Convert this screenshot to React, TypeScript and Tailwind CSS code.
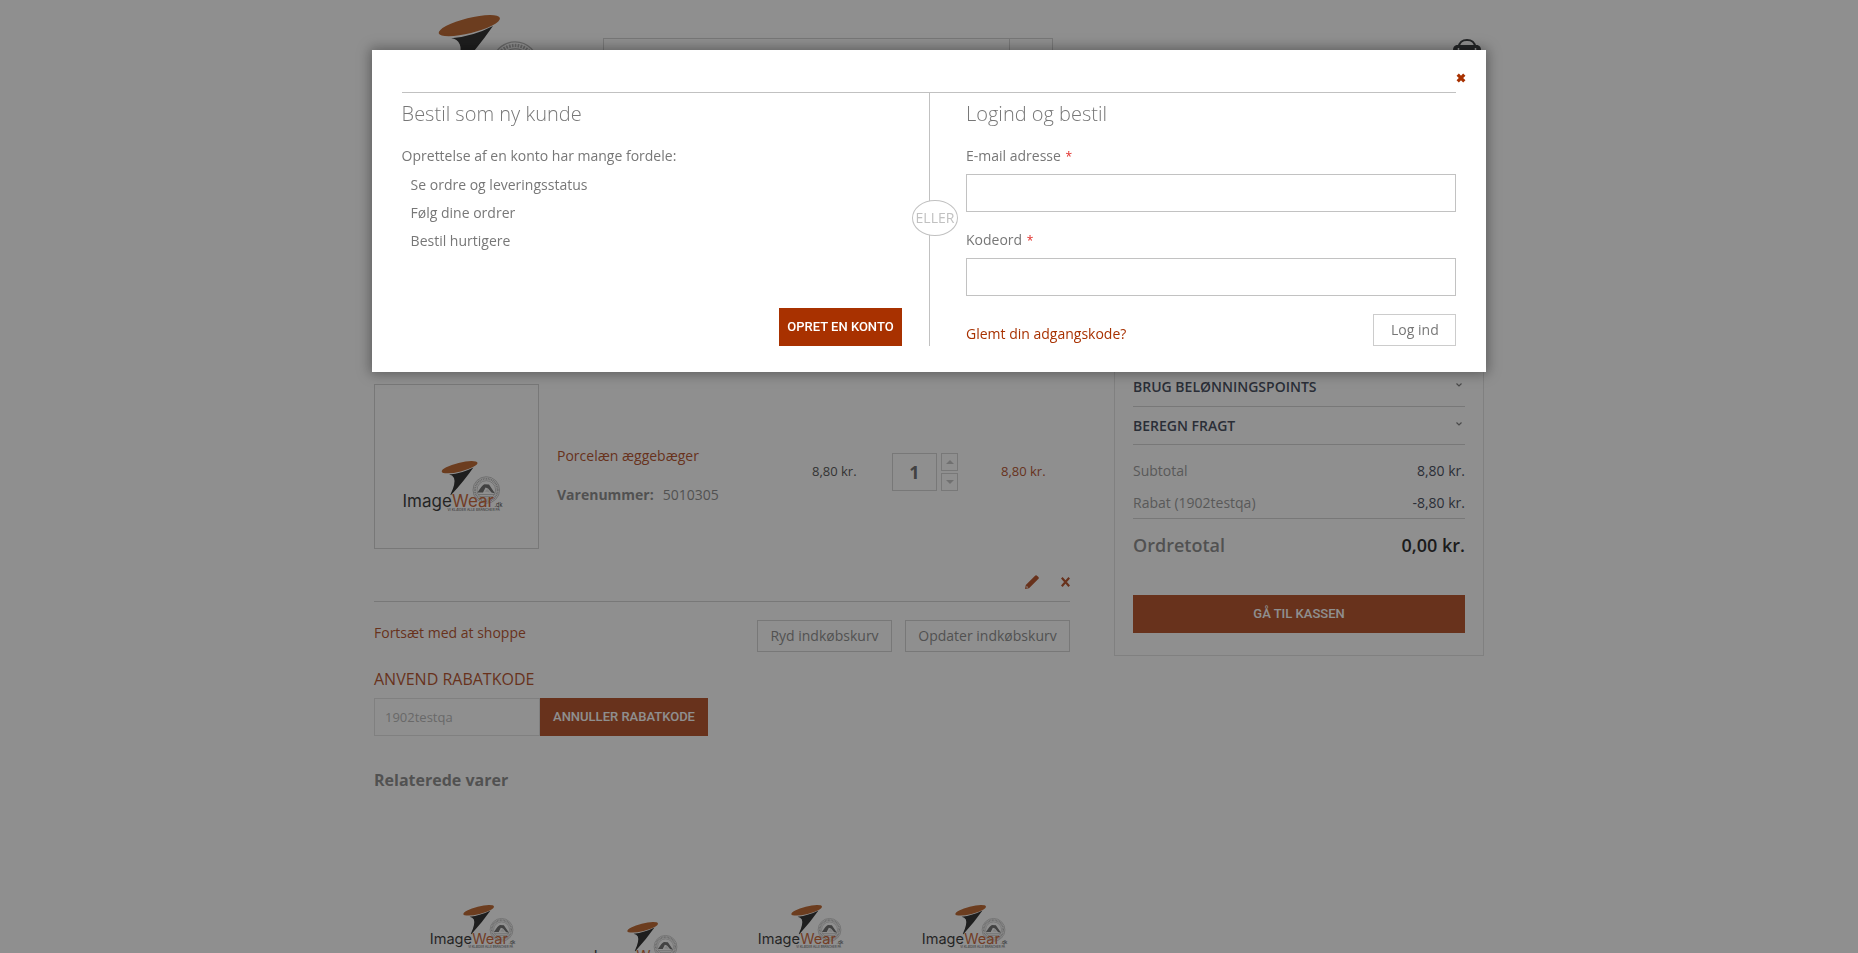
import React from "react";

const caption = "font-['Roboto','Open_Sans',sans-serif] text-[13px] font-medium text-white whitespace-nowrap";
const outline = "h-8 border border-[#ccc] text-sm text-[#777]";

function Logo({ className }: { className: string }) {
  return (
    <svg viewBox="0 0 98 52" className={`overflow-visible ${className}`} role="img" aria-label="ImageWear.dk">
      <g fill="none" stroke="#a8a8a8">
        <circle cx="82.3" cy="29" r="13.3" strokeWidth="0.8" />
        <circle cx="82.3" cy="29" r="11.3" strokeWidth="2" strokeDasharray="1 0.7" />
        <circle cx="82.3" cy="29" r="9.3" strokeWidth="0.7" />
      </g>
      <path d="M73.5 31.5Q78 24 80.5 23.2L85 23.6 91 32.5 87.5 31.5 84 27.5 81.500 26.500 79 31.5Z" fill="#555" />
      <path d="M80.500 30.500 83.500 28 86 31.500Z" fill="#ddd" />
      <path d="M74 33.5h16.5M76 35.7h12.5" stroke="#a8a8a8" strokeWidth="0.8" />
      <path d="M45 13.6Q58 12.4 69.4 6.4Q60 20 47 34L46.4 33.8Q52 22 50 17Q48.6 14 45 13.6Z" fill="#050505" />
      <ellipse cx="55.6" cy="6.2" rx="18.4" ry="4.4" transform="rotate(-14 55.6 6.2)" fill="#b24a08" />
      <g className="font-['Inter','Open_Sans',sans-serif]">
        <text x="-1.5" y="45.5" fontSize="17" fill="#111">Image</text>
        <text x="48" y="45.5" fontSize="17" fill="#c04a10">Wear</text>
        <text x="90.5" y="45.5" fontSize="5.5" fill="#222">.dk</text>
        <text x="43.5" y="50.4" fontSize="3.4" fill="#222">VI KLÆDER ALLE BRANCHER PÅ</text>
      </g>
    </svg>
  );
}

function CloseMark({ className }: { className: string }) {
  return (
    <svg viewBox="0 0 10 10" className={className} aria-hidden="true">
      <path d="M1.7 1.7l6.6 6.6M8.3 1.7l-6.6 6.6" stroke="currentColor" strokeWidth="3.2" />
    </svg>
  );
}

function Header() {
  return (
    <header className="mx-auto flex h-[120px] w-full max-w-[1110px] items-start">
      <Logo className="mt-[15px] w-[168px]" />
      <div className="mt-[38px] ml-[61px] flex h-10 w-[450px] border border-[#ccc]">
        <input aria-label="Søg" className="min-w-0 flex-1 border-r border-[#ccc] outline-none" />
        <button aria-label="Søg nu" className="w-[42px]" />
      </div>
      <button aria-label="Indkøbskurv" className="mt-[38px] mr-[3px] ml-auto text-[#111518]">
        <svg viewBox="0 0 28 30" className="w-7" fill="currentColor" aria-hidden="true">
          <path d="M6 9C6 4.5 9.5 2 14 2s8 2.5 8 7" fill="none" stroke="currentColor" strokeWidth="2.2" />
          <path d="M3.5 7h21q3.5 1 3.5 5l-3 17H3L0 12Q0 8 3.5 7Z" />
          <path d="M5.500 10v3M22.500 10v3" stroke="#fff" strokeWidth="1.5" />
        </svg>
      </button>
    </header>
  );
}

function Stepper({ up }: { up: boolean }) {
  return (
    <button aria-label={up ? "Flere" : "Færre"} className="flex h-[18px] w-[17px] items-center justify-center border border-[#ccc] text-[#bbb]">
      <svg viewBox="0 0 8 4" className="w-2" fill="currentColor" aria-hidden="true">
        <path d={up ? "M0 4 4 0 8 4Z" : "M0 0 4 4 8 0Z"} />
      </svg>
    </button>
  );
}

function CartItem() {
  return (
    <div className="border-b border-[#ccc] pb-3">
      <div className="flex h-[165px] items-center">
        <div className="flex h-[165px] w-[165px] shrink-0 justify-center border border-[#ccc] pt-[76px] pr-2">
          <Logo className="h-[52px] w-[98px]" />
        </div>
        <div className="mt-[18px] ml-[18px] w-[255px]">
          <a href="#vare" className="block leading-5 text-[#a83100]">Porcelæn æggebæger</a>
          <p className="mt-[19px] leading-5">
            <strong className="mr-[9px] font-bold">Varenummer:</strong>5010305
          </p>
        </div>
        <span className="mt-[10px] w-[80px] text-[13px] text-[#333]">8,80 kr.</span>
        <input aria-label="Antal" defaultValue="1" className="mt-[10px] h-[38px] w-[45px] border border-[#ccc] text-center text-[18px] font-bold text-[#555]" />
        <div className="mt-[10px] ml-1 flex flex-col gap-[2px]">
          <Stepper up />
          <Stepper up={false} />
        </div>
        <span className="mt-[10px] ml-[43px] text-[13px] text-[#a83100]">8,80 kr.</span>
      </div>
      <div className="mt-[26px] flex items-center justify-end gap-[22px] text-[#a83100]">
        <button aria-label="Rediger">
          <svg viewBox="0 0 14 14" className="h-[14px] w-[14px]" fill="currentColor" aria-hidden="true">
            <path d="M0 14 .8 10 9.8 1Q11-.3 12.3.9L13.2 1.8Q14.5 3 13 4.3L4 13.2Z" />
            <path d="M1.6 10.8 3.3 12.5 1.4 12.8Z" fill="#fff" />
          </svg>
        </button>
        <button aria-label="Fjern">
          <svg viewBox="0 0 9 10" className="h-[10px] w-[9px]" aria-hidden="true">
            <path d="M.8.8 8.2 9.2M8.2.8.8 9.2" stroke="currentColor" strokeWidth="2.2" />
          </svg>
        </button>
      </div>
    </div>
  );
}

function Summary() {
  const row = "flex items-center justify-between";
  return (
    <aside className="mt-[-70px] w-[370px] shrink-0 self-start border border-[#ddd] px-[18px] pt-[53px] pb-[22px]">
      {["BRUG BELØNNINGSPOINTS", "BEREGN FRAGT"].map((label) => (
        <button key={label} className={`${row} h-[38px] w-full border-b border-[#ccc] pt-px text-left font-semibold text-[#21293c] first:h-[39px] first:pb-px`}>
          {label}
          <svg viewBox="0 0 6 4" className="mr-[3px] mb-1 w-[6px]" aria-hidden="true">
            <path d="M.5.5 3 3 5.5.5" fill="none" stroke="#666" strokeWidth="1.200" />
          </svg>
        </button>
      ))}
      <div className={`${row} mt-[10px] h-8`}>
        <span className="text-[#888]">Subtotal</span>
        <span className="text-[#21293c]">8,80 kr.</span>
      </div>
      <div className={`${row} h-8 border-b border-[#ccc]`}>
        <span className="text-[#888]">Rabat (1902testqa)</span>
        <span className="text-[#21293c]">-8,80 kr.</span>
      </div>
      <div className={`${row} mt-[9px] h-9 text-[18px] font-semibold`}>
        <span className="text-[#777]">Ordretotal</span>
        <span className="text-black">0,00 kr.</span>
      </div>
      <button className={`mt-[31px] h-[38px] w-full bg-[#a83100] ${caption}`}>GÅ TIL KASSEN</button>
    </aside>
  );
}

function Field({ id, type, label }: { id: string; type: string; label: string }) {
  return (
    <div className="mt-[18px]">
      <label htmlFor={id} className="block leading-5">
        {label} <span className="ml-px text-xs text-[#e02b27]">*</span>
      </label>
      <input id={id} type={type} className="mt-2 block h-[38px] w-full border border-[#c2c2c2] px-2" />
    </div>
  );
}

function LoginModal() {
  return (
    <div className="fixed inset-0 flex items-start justify-center bg-[#333]/55 pt-[50px]">
      <div role="dialog" aria-label="Bestil" className="w-3/5 bg-white px-[30px] pb-[26px] shadow-[0_0_12px_2px_rgba(0,0,0,0.35)]">
        <div className="mr-[-10px] flex h-[42px] items-end justify-end pb-[9px]">
          <button aria-label="Luk" className="text-[#a83100]">
            <CloseMark className="h-[10px] w-[10px]" />
          </button>
        </div>
        <div className="flex border-t border-[#c1c1c1]">
          <section className="flex w-1/2 flex-col pt-[7px]">
            <h2 className="text-xl leading-7 font-light">Bestil som ny kunde</h2>
            <p className="mt-[18px] leading-5">Oprettelse af en konto har mange fordele:</p>
            <ul className="mt-[5px] pl-[9px] leading-7">
              <li>Se ordre og leveringsstatus</li>
              <li>Følg dine ordrer</li>
              <li>Bestil hurtigere</li>
            </ul>
            <button className={`mt-auto mr-[27px] h-[38px] w-[123px] self-end bg-[#a83100] ${caption}`}>OPRET EN KONTO</button>
          </section>
          <section className="relative w-1/2 border-l border-[#c1c1c1] pt-[7px] pl-9">
            <span className="absolute top-[107px] left-[-18px] flex h-9 w-[46px] items-center justify-center rounded-[50%] border border-[#c1c1c1] bg-white text-[#c1c1c1]">ELLER</span>
            <h2 className="text-xl leading-7 font-light">Logind og bestil</h2>
            <Field id="email" type="email" label="E-mail adresse" />
            <Field id="password" type="password" label="Kodeord" />
            <div className="mt-[18px] flex h-8 items-end justify-between">
              <a href="#glemt" className="pb-[2px] leading-5 text-[#a83100]">Glemt din adgangskode?</a>
              <button className={`${outline} w-[83px]`}>Log ind</button>
            </div>
          </section>
        </div>
      </div>
    </div>
  );
}

export default function App() {
  return (
    <div className="h-screen overflow-hidden bg-white font-['Open_Sans',sans-serif] text-sm text-[#777]">
      <Header />
      <div className="mx-auto flex w-full max-w-[1110px] gap-11 pt-[264px]">
        <main className="min-w-0 flex-1">
          <CartItem />
          <div className="flex items-start gap-[13px] pt-[18px]">
            <a href="#shop" className="mt-[3px] mr-auto leading-5 text-[#a83100]">Fortsæt med at shoppe</a>
            <button className={`${outline} w-[135px]`}>Ryd indkøbskurv</button>
            <button className={`${outline} w-[165px]`}>Opdater indkøbskurv</button>
          </div>
          <label htmlFor="coupon" className="mt-[15px] block text-base leading-6 text-[#a83100]">ANVEND RABATKODE</label>
          <div className="mt-[7px] flex">
            <input id="coupon" defaultValue="1902testqa" disabled className="h-[38px] w-[166px] border border-[#ddd] px-[10px] text-[13px] text-[#aaa]" />
            <button className={`h-[38px] w-[168px] bg-[#a83100] ${caption}`}>ANNULLER RABATKODE</button>
          </div>
          <h2 className="mt-8 text-base leading-6 font-bold">Relaterede varer</h2>
          <div className="mt-[113px] flex items-start gap-20 pl-[57px]">
            <Logo className="w-[84px]" />
            <Logo className="mt-[17px] w-[84px]" />
            <Logo className="w-[84px]" />
            <Logo className="w-[84px]" />
          </div>
        </main>
        <Summary />
      </div>
      <LoginModal />
    </div>
  );
}
